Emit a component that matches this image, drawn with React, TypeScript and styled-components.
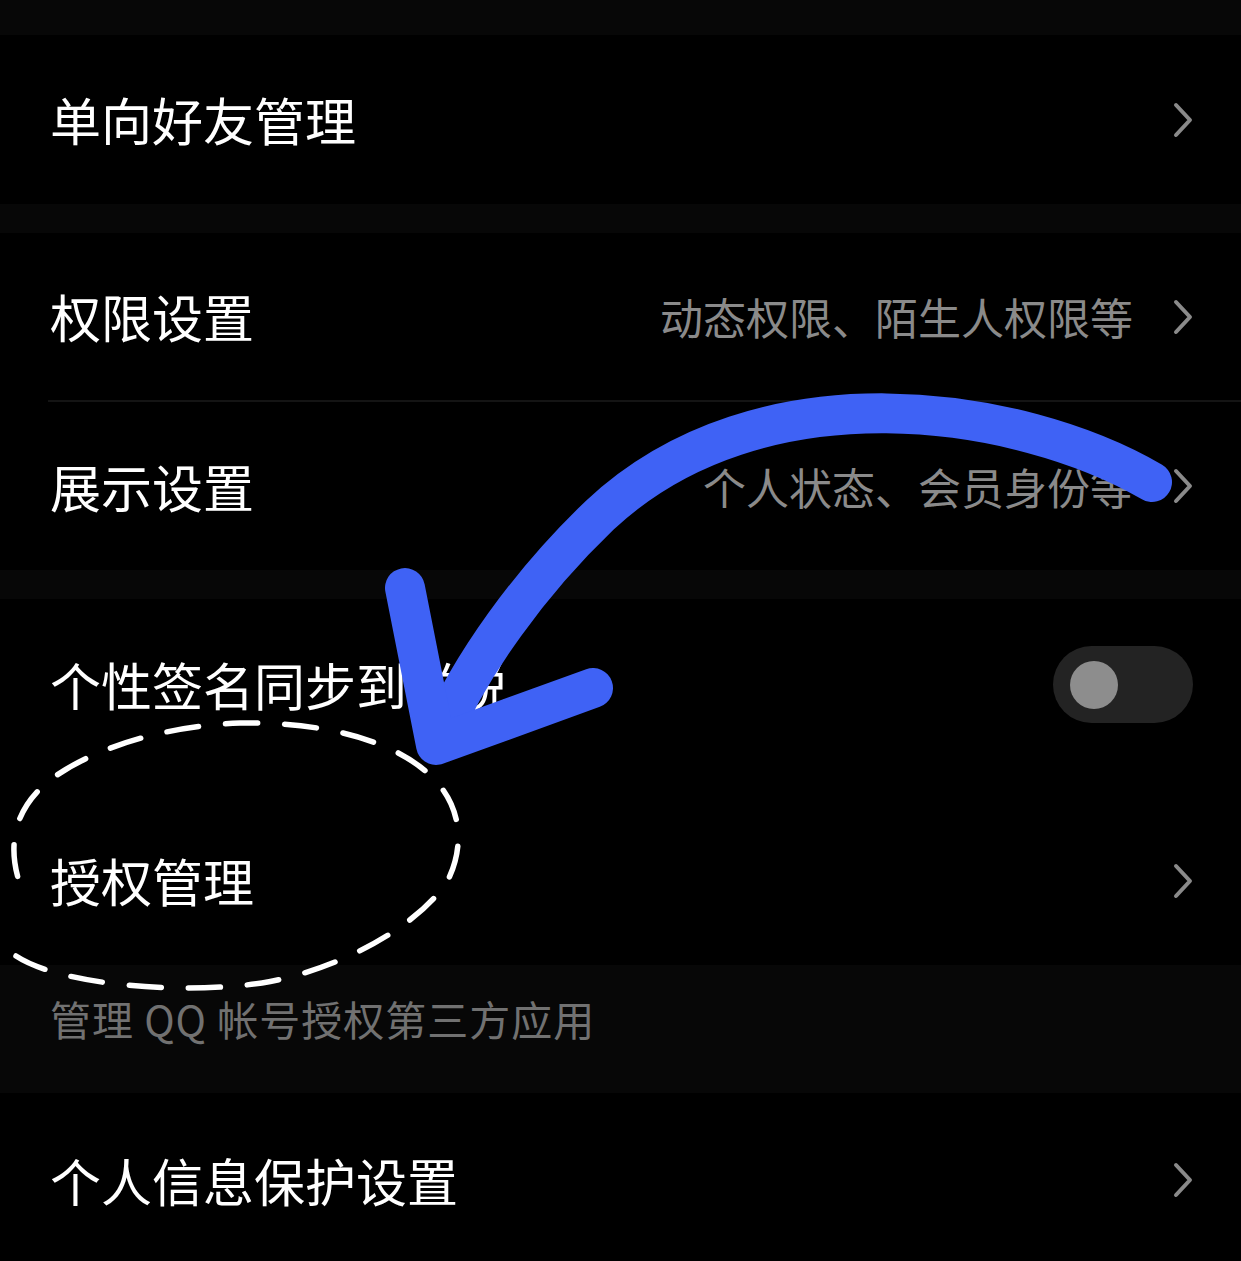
import styled, { createGlobalStyle, css } from 'styled-components';

const GlobalStyle = createGlobalStyle`
  html, body {
    margin: 0;
    padding: 0;
    background: #000;
  }

  body {
    font-family: 'Noto Sans CJK SC', 'Noto Sans', sans-serif;
    -webkit-font-smoothing: antialiased;
  }
`;

const Page = styled.div`
  position: relative;
  width: 1241px;
  height: 1261px;
  overflow: hidden;
  background: #000;
`;

const Band = styled.div<{ $h: number }>`
  height: ${(p) => p.$h}px;
  background: #070707;
`;

const Group = styled.section`
  background: #000;
`;

const Row = styled.div<{ $h: number; $divider?: boolean; $top?: number }>`
  display: flex;
  align-items: center;
  justify-content: space-between;
  box-sizing: border-box;
  height: ${(p) => p.$h}px;
  margin-left: 48px;
  padding: ${(p) => p.$top || 0}px 48px 0 2px;

  ${(p) =>
    p.$divider &&
    css`
      border-bottom: 2px solid #141414;
    `}
`;

const Title = styled.span`
  font-size: 51px;
  line-height: 1;
  color: #fff;
  white-space: nowrap;
`;

const Trail = styled.div`
  display: flex;
  align-items: center;
  gap: 40px;
`;

const Hint = styled.span`
  font-size: 43px;
  line-height: 1;
  color: #8a8a8a;
  white-space: nowrap;
`;

const Note = styled.div`
  box-sizing: border-box;
  height: 128px;
  padding: 29px 50px 0;
  background: #070707;
  font-size: 41px;
  line-height: 48px;
  letter-spacing: 1px;
  color: #717171;
  white-space: pre;
`;

const Switch = styled.div`
  display: flex;
  align-items: center;
  box-sizing: border-box;
  width: 140px;
  height: 77px;
  padding-left: 17px;
  border-radius: 39px;
  background: #232323;
`;

const Knob = styled.span`
  width: 48px;
  height: 48px;
  border-radius: 50%;
  background: #8d8d8d;
`;

const Overlay = styled.svg`
  position: absolute;
  top: 0;
  left: 0;
  pointer-events: none;
`;

function Chevron() {
  return (
    <svg width='20' height='36' viewBox='0 0 20 36'>
      <polyline
        points='3,3 17,18 3,33'
        fill='none'
        stroke='#8a8a8a'
        strokeWidth='4'
        strokeLinecap='round'
        strokeLinejoin='round'
      />
    </svg>
  );
}

function App() {
  return (
    <Page>
      <GlobalStyle />

      <Band $h={35} />
      <Group>
        <Row $h={169}>
          <Title>单向好友管理</Title>
          <Chevron />
        </Row>
      </Group>

      <Band $h={29} />
      <Group>
        <Row $h={169} $divider>
          <Title>权限设置</Title>
          <Trail>
            <Hint>动态权限、陌生人权限等</Hint>
            <Chevron />
          </Trail>
        </Row>
        <Row $h={168}>
          <Title>展示设置</Title>
          <Trail>
            <Hint>个人状态、会员身份等</Hint>
            <Chevron />
          </Trail>
        </Row>
      </Group>

      <Band $h={29} />
      <Group>
        <Row $h={171}>
          <Title>个性签名同步到说说</Title>
          <Switch>
            <Knob />
          </Switch>
        </Row>
        <Row $h={195} $top={26}>
          <Title>授权管理</Title>
          <Chevron />
        </Row>
      </Group>
      <Note>管理 QQ 帐号授权第三方应用</Note>

      <Group>
        <Row $h={174}>
          <Title>个人信息保护设置</Title>
          <Chevron />
        </Row>
      </Group>

      {/* hand-drawn annotations on top of the screenshot */}
      <Overlay width='1241' height='1261' viewBox='0 0 1241 1261'>
        <path
          d='M16 956 C60 985, 180 995, 262 983 C340 970, 420 925, 448 880 C465 845, 462 805, 430 775 C390 738, 320 722, 240 723 C160 726, 90 750, 50 780 C15 808, 5 845, 22 890'
          fill='none'
          stroke='#fff'
          strokeWidth='5.5'
          strokeDasharray='32 27'
          strokeLinecap='round'
        />
        <g fill='none' stroke='#3f62f5' strokeWidth='40' strokeLinecap='round' strokeLinejoin='round'>
          <path d='M1152 482 C1020 405, 760 365, 600 515 C530 582, 470 665, 438 740' />
          <path d='M405 588 L436 745 L593 688' />
        </g>
      </Overlay>
    </Page>
  );
}

export default App;
